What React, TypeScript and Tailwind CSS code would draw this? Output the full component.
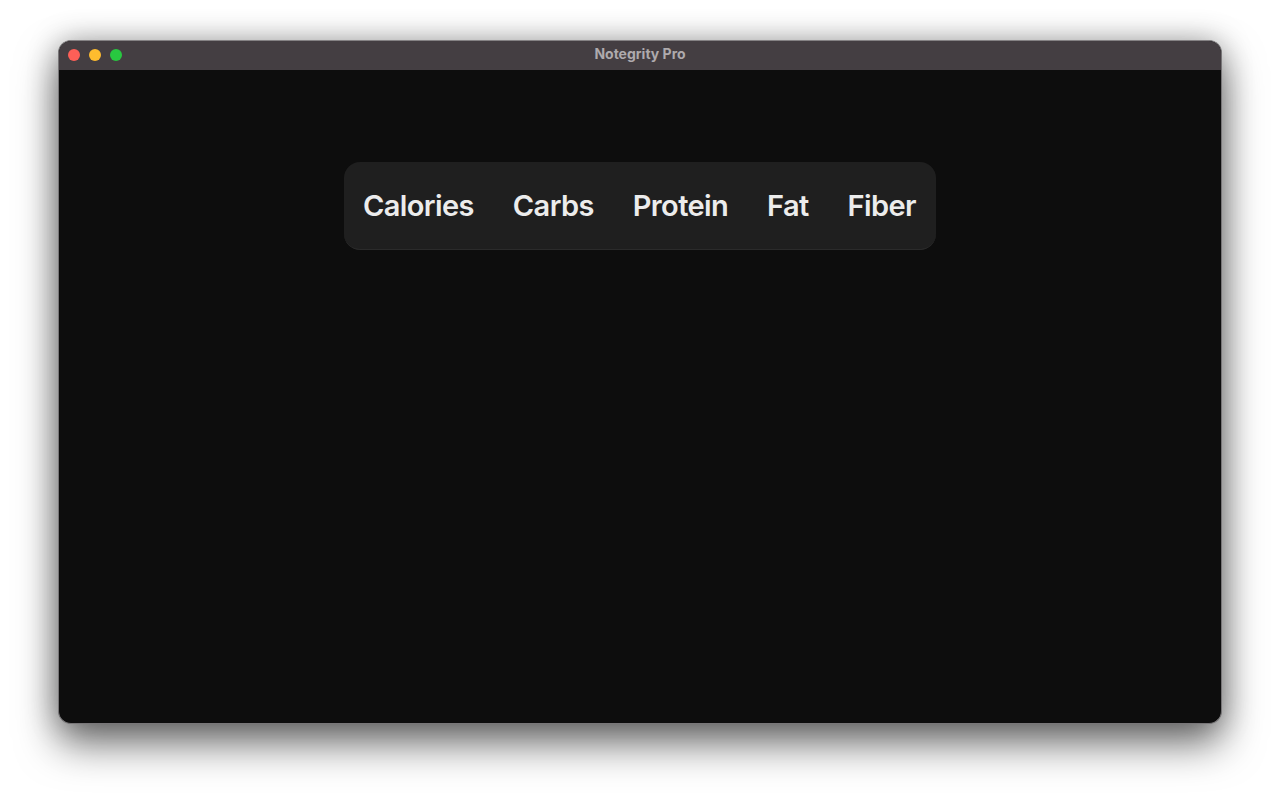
export default function App() {
  const items = ["Calories", "Carbs", "Protein", "Fat", "Fiber"];
  return (
    <div className="w-[1280px] h-[802px] bg-white overflow-hidden pt-10 pl-[58px]" style={{ fontFamily: "Inter, sans-serif" }}>
      <div className="w-[1164px] h-[684px] rounded-[13px] overflow-hidden flex flex-col bg-[#0d0d0d] border border-[#787678] border-t-[#858284] shadow-[0_20px_40px_rgba(0,0,0,0.55),0_0_30px_rgba(0,0,0,0.28)]">
        <div className="relative h-[29px] shrink-0 bg-[#443e42] flex items-center justify-center">
          <div className="absolute left-[9px] top-[8px] flex gap-[9px]">
            <span className="w-[12px] h-[12px] rounded-full bg-[#fe5f57]" />
            <span className="w-[12px] h-[12px] rounded-full bg-[#febc2e]" />
            <span className="w-[12px] h-[12px] rounded-full bg-[#28c840]" />
          </div>
          <span className="text-[14px] leading-[16px] pb-[4px] font-bold text-[#aeaaad]">Notegrity Pro</span>
        </div>
        <div className="flex-1 flex justify-center items-start pt-[92px]">
          <div className="w-[592px] h-[88px] rounded-[16px] bg-[#1f1f1f] border-b border-[#2b2b2b] flex items-center justify-between pl-[19px] pr-[20px]">
            {items.map((t) => (
              <span key={t} className="text-[29px] font-semibold text-[#ececec] tracking-[-0.6px]">{t}</span>
            ))}
          </div>
        </div>
      </div>
    </div>
  );
}
